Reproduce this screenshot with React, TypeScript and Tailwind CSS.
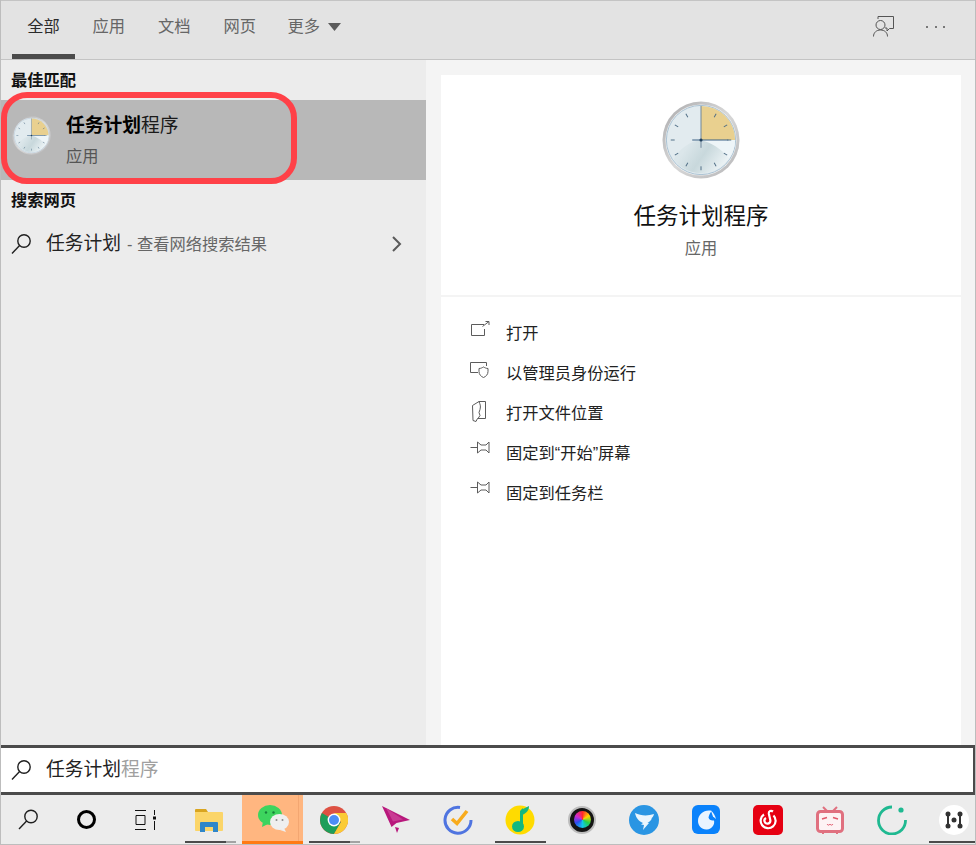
import type { ReactNode } from "react";

function Magnifier({ className }: { className: string }) {
  return (
    <svg className={className} viewBox="0 0 21 20" fill="none" stroke="#1f1f1f" strokeWidth="1.4">
      <circle cx="13" cy="7" r="6.2" />
      <path d="M8.6 11.6 1 19.4" />
    </svg>
  );
}

function Clock({ className, id }: { className: string; id: string }) {
  const ticks = [30, 60, 90, 120, 150, 180, 210, 240, 270, 300, 330];
  return (
    <svg className={className} viewBox="0 0 80 80">
      <defs>
        <linearGradient id={`${id}-rim`} x1="0" y1="0" x2="1" y2="1">
          <stop offset="0" stopColor="#a9a9ab" />
          <stop offset="0.5" stopColor="#d8d8d8" />
          <stop offset="1" stopColor="#b5b5b7" />
        </linearGradient>
        <linearGradient id={`${id}-low`} x1="0.1" y1="0.5" x2="0.9" y2="0.8">
          <stop offset="0" stopColor="#dbe6ea" />
          <stop offset="0.4" stopColor="#c8d8dc" />
          <stop offset="1" stopColor="#f4f9fb" />
        </linearGradient>
      </defs>
      <circle cx="40" cy="40" r="39.500" fill={`url(#${id}-rim)`} />
      <circle cx="40" cy="40" r="36.500" fill="#f1f1f1" />
      <circle cx="40" cy="40" r="35.500" fill="#e2ebef" stroke="#a9c1d3" strokeWidth="1" />
      <path d="M40 40V5a35 35 0 0 1 35 35Z" fill="#e9d08f" />
      <path d="M12 60c6-12 18-19 28-20h35a35 35 0 0 1-63 20Z" fill={`url(#${id}-low)`} />
      <path d="M40 40H75a35 35 0 0 1-6 19C60 48 50 43 40 40Z" fill="#eef5f8" />
      {ticks.map((a) => (
        <path key={a} d="M40 9v4" stroke="#4f6d85" strokeWidth="1" transform={`rotate(${a} 40 40)`} />
      ))}
      <path d="M40 5V48" stroke="#6b8499" strokeWidth="1" />
      <path d="M31 40H68" stroke="#3d6285" strokeWidth="1.200" />
      <circle cx="40" cy="40" r="1.600" fill="#1f3f5c" />
    </svg>
  );
}

function Cell({
  width,
  under,
  children,
}: {
  width: string;
  under?: ReactNode;
  children: ReactNode;
}) {
  return (
    <div className={`relative flex h-full shrink-0 items-center justify-center ${width}`}>
      {children}
      {under}
    </div>
  );
}

function RunBar({ left }: { left: string }) {
  return (
    <div className={`absolute bottom-[1px] flex h-[2px] w-[51px] ${left}`}>
      <div className="w-[41px] bg-[#4b4b4b]" />
      <div className="flex-1 bg-[#a3a3a3]" />
    </div>
  );
}

function Taskbar() {
  return (
    <div className="flex h-[49px] w-full shrink-0 overflow-hidden bg-[#ececec]">
      <Cell width="w-[54px]">
        <Magnifier className="h-[21px] w-[21px]" />
      </Cell>
      <Cell width="w-[62px]">
        <div className="h-[19px] w-[19px] rounded-full border-[3px] border-black" />
      </Cell>
      <Cell width="w-[58px]">
        <svg className="h-[20px] w-[22px]" viewBox="0 0 22 20" fill="none" stroke="#111" strokeWidth="1">
          <path d="M0 .5h11M1 5.500h9v9H1zM0 19.500h11M19.500 0v5M19.500 11v9" />
          <rect x="18" y="6.500" width="3" height="3" fill="#111" stroke="none" />
        </svg>
      </Cell>
      <Cell width="w-[67px]" under={<RunBar left="left-[10px]" />}>
        <svg className="ml-[1px] h-[24px] w-[28px]" viewBox="0 0 28 24">
          <path d="M0 2a1 1 0 0 1 1-1h10l2 3H0Z" fill="#d9a520" />
          <path d="M0 4h27a1 1 0 0 1 1 1v17a1 1 0 0 1-1 1H1a1 1 0 0 1-1-1Z" fill="#fbd569" />
          <path d="M5 24v-9a1 1 0 0 1 1-1h16a1 1 0 0 1 1 1v9h-5v-5h-8v5Z" fill="#2f86c9" />
        </svg>
      </Cell>
      <Cell
        width="w-[61px]"
        under={<div className="absolute bottom-0 left-0 h-[3px] w-full bg-[#ff7a14]" />}
      >
        <div className="absolute inset-0 bg-[#ffb680]" />
        <div className="absolute inset-y-0 right-[4px] w-px bg-[#f3a671]" />
        <svg className="relative mb-[2px] ml-[1px] h-[27px] w-[31px]" viewBox="0 0 31 27">
          <ellipse cx="12" cy="10" rx="12" ry="10" fill="#3dd45e" />
          <path d="M5 16l-1 6 6-3Z" fill="#3dd45e" />
          <circle cx="8" cy="7.500" r="1.200" fill="#17813a" />
          <circle cx="15.500" cy="7.500" r="1.200" fill="#17813a" />
          <ellipse cx="21.500" cy="17" rx="9.500" ry="8" fill="#efefef" />
          <path d="M26 23l2 4-6-2Z" fill="#efefef" />
          <circle cx="18.500" cy="15" r="1" fill="#8a8a8a" />
          <circle cx="24.500" cy="15" r="1" fill="#8a8a8a" />
        </svg>
      </Cell>
      <Cell width="w-[62px]" under={<RunBar left="left-[6px]" />}>
        <svg className="h-[28px] w-[28px]" viewBox="0 0 28 28">
          <circle cx="14" cy="14" r="14" fill="#dd5143" />
          <path d="M14 14 1.900 7A14 14 0 0 0 14 28l7-12Z" fill="#1e9e5a" />
          <path d="M14 7h12.200A14 14 0 0 1 14 28l7-12Z" fill="#fbcb35" />
          <circle cx="14" cy="14" r="6.400" fill="#fff" />
          <circle cx="14" cy="14" r="5" fill="#4d8df5" />
        </svg>
      </Cell>
      <Cell width="w-[62px]">
        <svg className="h-[27px] w-[28px]" viewBox="0 0 28 27">
          <path d="M0 0 28 14 14.500 17l-5 4Z" fill="#b8187c" />
          <path d="M4 2 21 13.500 11 15.500Z" fill="#c93a93" />
          <path d="M13 21l4 1-2 5Z" fill="#b8187c" />
        </svg>
      </Cell>
      <Cell width="w-[62px]">
        <svg className="h-[30px] w-[30px]" viewBox="0 0 30 30" fill="none">
          <path d="M17 2.400A13 13 0 1 0 28 15" stroke="#4f74e0" strokeWidth="3" />
          <path d="M9 14l5 4.500L24 6" stroke="#f8ab1c" strokeWidth="3.600" />
        </svg>
      </Cell>
      <Cell
        width="w-[62px]"
        under={<div className="absolute bottom-[1px] left-[6px] h-[2px] w-[51px] bg-[#4b4b4b]" />}
      >
        <svg className="h-[30px] w-[30px]" viewBox="0 0 30 30">
          <circle cx="15" cy="15" r="14.500" fill="#ffdb00" />
          <path d="M18 3v18h-3V6Z" fill="#14b87f" />
          <path d="M16 5 24 1c0 4-2 7-7 9Z" fill="#14b87f" />
          <ellipse cx="13" cy="21.500" rx="6" ry="5.500" fill="#14b87f" />
        </svg>
      </Cell>
      <Cell width="w-[62px]">
        <div className="flex h-[28px] w-[28px] items-center justify-center rounded-full border-2 border-[#bdbdbd] bg-[#151515]">
          <div className="h-[17px] w-[17px] rounded-full bg-[conic-gradient(#ff2a2a,#ffd400,#22d04c,#12c8e8,#2a50f0,#d02ad0,#ff2a2a)]" />
        </div>
      </Cell>
      <Cell width="w-[62px]">
        <svg className="h-[30px] w-[30px]" viewBox="0 0 30 30">
          <circle cx="15" cy="15" r="15" fill="#2a95e3" />
          <path d="M6 8c6 3 13 3 19 1-.5 2-1.500 3.500-3 4.500l1-.2c-1 2.200-2.500 3.700-4.500 4.700h1.500L14 25l1-5-3-.5 2-1.500c-4-1.500-7-5-8-10Z" fill="#eaf5fd" />
        </svg>
      </Cell>
      <Cell width="w-[62px]">
        <svg className="h-[30px] w-[28px]" viewBox="0 0 28 30">
          <rect width="28" height="29" rx="6" fill="#0a82fb" />
          <path d="M20 6C13 4 6 9 6 16c0 5 4 9 9 8.500 5-.5 8-5 7-9-3 .5-5-1-5.500-3 .5-2.500 1.500-5 3.500-6.500Z" fill="#eaf4ff" />
          <path d="M19 6c2 1 4 4 5 8l-3-2.500Z" fill="#eaf4ff" />
        </svg>
      </Cell>
      <Cell width="w-[62px]">
        <svg className="h-[30px] w-[30px]" viewBox="0 0 30 30" fill="none">
          <rect width="30" height="30" rx="5" fill="#e60012" />
          <path d="M20 6.500c-2-1.500-4.500-.5-4.200 2l1.600 7a3 3 0 1 1-4.400-2.500" stroke="#fff" strokeWidth="2.200" />
          <path d="M11 9.500a7.500 7.500 0 1 0 9.500 1" stroke="#fff" strokeWidth="2.200" />
        </svg>
      </Cell>
      <Cell width="w-[62px]">
        <svg className="h-[28px] w-[28px]" viewBox="0 0 28 28" fill="none">
          <path d="M7 1l4 4M21 1l-4 4" stroke="#e0707f" strokeWidth="2" />
          <rect x="1.500" y="5.500" width="25" height="20" rx="3" fill="#fdf3f4" stroke="#e0707f" strokeWidth="3" />
          <path d="M6 13l5-1.500M22 13l-5-1.500" stroke="#e25a6c" strokeWidth="1.600" />
          <path d="M11 18c1 1.500 2 1.500 3 0 1 1.500 2 1.500 3 0" stroke="#e25a6c" strokeWidth="1" />
          <path d="M7 26v2M21 26v2" stroke="#e0707f" strokeWidth="2" />
        </svg>
      </Cell>
      <Cell width="w-[62px]">
        <svg className="h-[30px] w-[30px]" viewBox="0 0 30 30" fill="none">
          <path d="M15 2A13.500 13.500 0 1 0 28.500 15" stroke="#1fb991" strokeWidth="2.800" />
          <circle cx="24" cy="5" r="2.600" fill="#1fb991" />
        </svg>
      </Cell>
      <Cell
        width="w-[62px]"
        under={<div className="absolute bottom-[1px] left-[6px] right-0 h-[2px] bg-[#4b4b4b]" />}
      >
        <svg className="h-[30px] w-[30px]" viewBox="0 0 30 30" fill="none">
          <circle cx="15" cy="15" r="15" fill="#fff" />
          <path d="M9 9v12M21 9v12" stroke="#333" strokeWidth="2" />
          <circle cx="9" cy="9" r="2.500" fill="#333" />
          <circle cx="21" cy="9" r="2.500" fill="#333" />
          <circle cx="9" cy="21" r="2.500" fill="#333" />
          <circle cx="21" cy="21" r="2.500" fill="#333" />
          <circle cx="15" cy="15" r="2.500" fill="#333" />
        </svg>
      </Cell>
    </div>
  );
}

const tabs = ["应用", "文档", "网页"];

const pin = <path d="M.500 6.500h7M7.500 1v11l3.500-3h5l3 3V1l-3 3h-5Z" />;

const actions: { label: string; icon: ReactNode }[] = [
  {
    label: "打开",
    icon: <path d="M14 3.500H1.500v11h13V8M12.500 5.500 19 .500M15.500.500H19V4" />,
  },
  {
    label: "以管理员身份运行",
    icon: (
      <>
        <path d="M8 11.500H.500V1.500h16V5" />
        <path d="M9 7.500c2 0 3.500-1 4.500-1.500 1 .5 2.500 1.500 4.500 1.500v3c0 3-2 5-4.500 6-2.500-1-4.500-3-4.500-6Z" />
      </>
    ),
  },
  {
    label: "打开文件位置",
    icon: <path d="M2.500 4.500 9 .500h6.500v17H7.500l-1.500 3-3-1Zm6.500-4c1 3 2 4 1 8l-1 3 1 3-2 3" />,
  },
  { label: "固定到“开始”屏幕", icon: pin },
  { label: "固定到任务栏", icon: pin },
];

export default function App() {
  return (
    <div className="relative flex h-[845px] w-[976px] flex-col overflow-hidden border-x border-b border-[#bdbdbd] bg-[#ececec] font-[family-name:'Liberation_Sans','Noto_Sans_CJK_SC',sans-serif] text-black">
      {/* tabs */}
      <div className="flex h-[60px] shrink-0 items-stretch justify-between border-y border-y-[#c4c4c4] bg-[#e3e3e3]">
        <div className="flex pl-[11px]">
          <div className="flex h-full w-[63px] items-center justify-center border-b-[5px] border-[#4b4b4b] pb-[2px] text-[16.250px] text-[#2b2b2b]">
            全部
          </div>
          {tabs.map((t) => (
            <div key={t} className="ml-[2px] flex h-full w-[63.500px] items-center justify-center pb-[7px] text-[16.250px] text-[#666]">
              {t}
            </div>
          ))}
          <div className="ml-[16px] flex items-center gap-2 pb-[7px] text-[16.250px] text-[#666]">
            更多
            <svg className="h-[8px] w-[13px]" viewBox="0 0 13 8">
              <path d="M0 0h13L6.500 8Z" fill="#5c5c5c" />
            </svg>
          </div>
        </div>
        <div className="flex items-center gap-[32px] pb-[7px] pr-[30px]">
          <svg className="h-[21px] w-[21px]" viewBox="0 0 21 21" fill="none" stroke="#555" strokeWidth="1">
            <path d="M5 3V.500h15.500v12h-4l-2.500 2.500v-3h-2" />
            <circle cx="7.500" cy="9" r="4.500" />
            <path d="M.500 20.500c0-4 3-6.500 7-6.500s7 2.500 7 6.500" />
          </svg>
          <div className="flex gap-[6.500px]">
            <span className="h-[2px] w-[2px] rounded-full bg-[#555]" />
            <span className="h-[2px] w-[2px] rounded-full bg-[#555]" />
            <span className="h-[2px] w-[2px] rounded-full bg-[#555]" />
          </div>
        </div>
      </div>

      <div className="flex min-h-0 flex-1">
        {/* results */}
        <div className="w-[425px] shrink-0 bg-[#ececec]">
          <div className="flex h-[40px] items-center pl-[10px] text-[16.250px] font-bold leading-none text-[#111]">最佳匹配</div>
          <div className="flex h-[80px] items-center bg-[#b8b8b8]">
            <Clock id="small" className="mb-[10px] ml-[11px] h-[39px] w-[39px]" />
            <div className="ml-[15px]">
              <div className="text-[18.750px] leading-[28px] text-black">
                <span className="font-bold">任务计划</span>
                <span className="text-[#1a1a1a]">程序</span>
              </div>
              <div className="mt-[4px] text-[16.250px] leading-[24px] text-[#555]">应用</div>
            </div>
          </div>
          <div className="flex h-[40px] items-center pl-[10px] text-[16.250px] font-bold leading-none text-[#111]">搜索网页</div>
          <div className="flex h-[44px] items-center pl-[10px] pr-[24px] pt-[4px]">
            <Magnifier className="h-[20px] w-[21px]" />
            <span className="ml-[14px] text-[18.750px] leading-none text-[#222]">任务计划</span>
            <span className="ml-[6px] text-[16.250px] leading-none text-[#666]">- 查看网络搜索结果</span>
            <svg className="ml-auto h-[16px] w-[11px]" viewBox="0 0 11 16" fill="none" stroke="#5a5a5a" strokeWidth="2">
              <path d="M2 1l7 7-7 7" />
            </svg>
          </div>
        </div>

        {/* details */}
        <div className="flex flex-1 flex-col gap-[2px] bg-[#f4f4f4] pl-[15px] pr-[14px] pt-[15px]">
          <div className="flex h-[220px] shrink-0 flex-col items-center bg-white pt-[26px]">
            <Clock id="large" className="h-[78px] w-[78px]" />
            <div className="mt-[21px] text-[22.500px] leading-[34px] text-[#111]">任务计划程序</div>
            <div className="mt-[2px] text-[16.250px] leading-[24px] text-[#666]">应用</div>
          </div>
          <div className="flex-1 bg-white pl-[29px] pt-[16px]">
            {actions.map((a) => (
              <div key={a.label} className="flex h-[40px] items-center text-[16.250px] text-[#222]">
                <svg className="mb-[4px] h-[21px] w-[21px]" viewBox="0 0 21 21" fill="none" stroke="#5c5c5c" strokeWidth="1">
                  {a.icon}
                </svg>
                <span className="ml-[15px]">{a.label}</span>
              </div>
            ))}
          </div>
        </div>
      </div>

      {/* search box */}
      <div className="flex h-[50px] shrink-0 items-center border-y-[3px] border-r-[2px] border-[#4b4b4b] bg-white pl-[10px]">
        <Magnifier className="h-[20px] w-[21px]" />
        <span className="ml-[14px] text-[18.750px] leading-none text-[#222]">
          任务计划<span className="text-[#a0a0a0]">程序</span>
        </span>
      </div>

      <Taskbar />

      {/* red annotation */}
      <div className="absolute left-0 top-[92px] h-[92px] w-[296px] rounded-[26px] border-[6px] border-[#ff4148]" />
    </div>
  );
}
